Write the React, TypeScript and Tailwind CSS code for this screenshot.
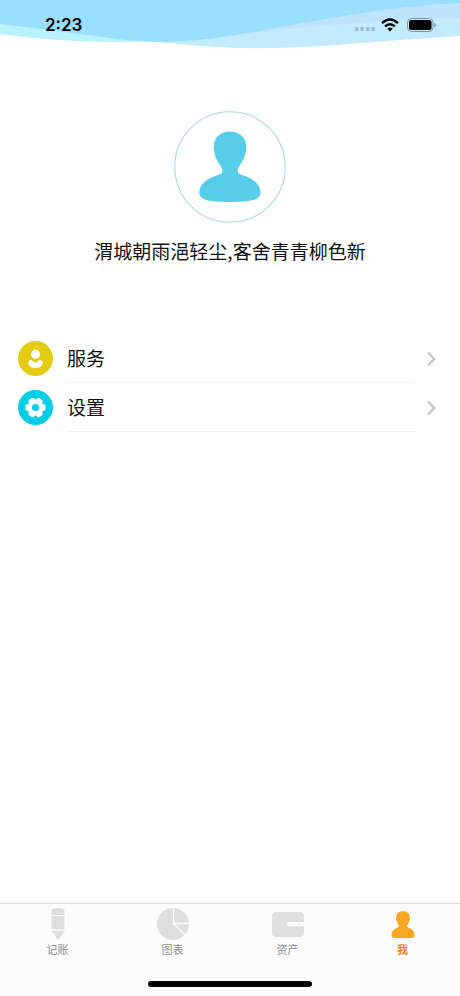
import type { ReactNode } from "react";

function Waves() {
  return (
    <svg
      className="absolute inset-x-0 top-0 h-[50px] w-full"
      viewBox="0 0 460 50"
      preserveAspectRatio="none"
      aria-hidden="true"
    >
      <path d="M0 20V34Q50 41 110 42Q150 42 190 40L190 20Z" fill="#b9f1ff" />
      <path d="M150 41Q190 46 236 48Q290 49 350 44Q410 39 460 36V0H150Z" fill="#c3ebff" />
      <path d="M150 41Q200 39 240 34Q320 25 345 24Q400 18 460 18V0H150Z" fill="#bde3ff" />
      <path d="M0 0V24Q60 31 110 38Q140 42 165 42Q200 41 236 35Q300 23 350 15Q410 5 460 3V0Z" fill="#99dfff" />
    </svg>
  );
}

function StatusBar() {
  return (
    <div className="relative flex h-[50px] items-center pr-6 pl-[45px] font-['Inter',sans-serif] text-black">
      <time className="flex-1 text-[17px] leading-[50px] font-semibold">2:23</time>
      <div className="flex items-center">
        <svg className="mt-2 mr-[6px] h-1 w-5" viewBox="0 0 20 4" fill="#9dbccd" aria-hidden="true">
          <rect width="3.6" height="4" rx="1.2" />
          <rect x="5.4" width="3.6" height="4" rx="1.2" />
          <rect x="10.9" width="3.6" height="4" rx="1.2" />
          <rect x="16.4" width="3.6" height="4" rx="1.2" />
        </svg>
        <svg className="mr-2 h-[14px] w-[18px]" viewBox="0 0 18 14" fill="none" stroke="#000" strokeWidth="2.4" aria-hidden="true">
          <path d="M1 5.1Q9 -2 17 5.1" />
          <path d="M4 8.4Q9 4 14 8.4" />
          <path d="M9 13.4L6.2 10.6Q9 8.4 11.8 10.6Z" fill="#000" stroke="none" />
        </svg>
        <svg className="h-[14px] w-[29px]" viewBox="0 0 29 14" aria-hidden="true">
          <rect x=".5" y=".5" width="25.5" height="13" rx="4" fill="none" stroke="#7d949f" />
          <rect x="2" y="2" width="22.5" height="10" rx="2.5" fill="#000" />
          <path d="M27.3 4.8Q29 5.6 29 7T27.3 9.2Z" fill="#7d949f" />
        </svg>
      </div>
    </div>
  );
}

function ServiceIcon() {
  return (
    <svg className="size-[35px]" viewBox="0 0 36 36" aria-hidden="true">
      <circle cx="18" cy="18" r="18" fill="#e6cb14" />
      <circle cx="18" cy="13.6" r="4.6" fill="#fff" />
      <path d="M13 19.2Q14.500 19.200 18 23Q21.500 19.200 23 19.200Q25.600 20 25.600 22.300Q24.700 27.800 18 27.800T10.400 22.300Q10.400 20 13 19.200Z" fill="#fff" />
    </svg>
  );
}

function SettingsIcon() {
  return (
    <svg className="size-[35px]" viewBox="0 0 36 36" aria-hidden="true">
      <circle cx="18" cy="18" r="18" fill="#05cde6" />
      <g fill="#fff">
        <circle cx="18" cy="18" r="8.4" />
        {[0, 60, 120].map((angle) => (
          <rect key={angle} x="7.6" y="14.6" width="20.8" height="6.8" rx="2" transform={`rotate(${angle} 18 18)`} />
        ))}
      </g>
      <circle cx="18" cy="18" r="3.7" fill="#05cde6" />
    </svg>
  );
}

function MenuRow({ icon, label }: { icon: ReactNode; label: string }) {
  return (
    <li>
      <button type="button" className="flex h-[49px] w-full items-center pr-6 text-left">
        <span className="w-[67px] shrink-0 pl-[18px]">{icon}</span>
        <span className="flex h-full flex-1 items-center border-b border-[#f1f1f1] text-[19px] leading-6">{label}</span>
        <svg className="ml-3 h-4 w-[9px]" viewBox="0 0 9 16" fill="none" stroke="#c4c4c4" strokeWidth="2.2" aria-hidden="true">
          <path d="M1 1.5L7.2 8L1 14.5" />
        </svg>
      </button>
    </li>
  );
}

function PencilIcon() {
  return (
    <svg className="size-8" viewBox="0 0 32 32" fill="#dedede" aria-hidden="true">
      <path d="M9.5 7V3Q9.5 0 16 0T22.5 3V7Z" />
      <path d="M9.5 8.2H22.5V21.4H9.5Z" />
      <path d="M9.5 23H22.5L16 32Z" />
    </svg>
  );
}

function PieIcon() {
  return (
    <svg className="size-8" viewBox="0 0 32 32" aria-hidden="true">
      <circle cx="16" cy="16" r="16" fill="#dedede" />
      <path d="M16.5 0V15.5H32M16.5 15.5L28 27" fill="none" stroke="#fff" strokeWidth="1.4" />
    </svg>
  );
}

function WalletIcon() {
  return (
    <svg className="size-8" viewBox="0 0 32 32" aria-hidden="true">
      <path d="M4 4H28Q32 4 32 8V14H17.5Q15 14 15 16.2T17.5 18.5H32V25Q32 29 28 29H4Q0 29 0 25V8Q0 4 4 4Z" fill="#dedede" />
      <circle cx="27" cy="16.3" r="0.8" fill="#dedede" />
    </svg>
  );
}

function PersonIcon() {
  return (
    <svg className="size-8" viewBox="0 0 32 32" fill="#f7a721" aria-hidden="true">
      <path d="M16 3C20.5 3 23 6 22.7 10C23.6 10.3 22.8 13.4 22 13.8C21.5 15.8 20.5 16.5 20 18C20.3 20.5 27 20 27.4 26V28.5Q26.5 30 22 30H10Q5.5 30 4.6 28.5V26C5 20 11.7 20.5 12 18C11.5 16.5 10.5 15.8 10 13.8C9.2 13.4 8.4 10.3 9.3 10C9 6 11.5 3 16 3Z" />
    </svg>
  );
}

const tabs = [
  { label: "记账", icon: <PencilIcon />, active: false },
  { label: "图表", icon: <PieIcon />, active: false },
  { label: "资产", icon: <WalletIcon />, active: false },
  { label: "我", icon: <PersonIcon />, active: true },
];

export default function App() {
  return (
    <div className="flex min-h-screen flex-col bg-white font-['Noto_Sans_CJK_SC',sans-serif] text-[#111]">
      <header className="relative">
        <Waves />
        <StatusBar />
      </header>

      <main className="flex-1">
        <section className="flex flex-col items-center pt-[61px]">
          <svg className="size-[112px]" viewBox="0 0 112 112" role="img" aria-label="头像">
            <circle cx="56" cy="56" r="55.2" fill="#fff" stroke="#a9d8d6" strokeWidth="1.1" />
            <path
              d="M56 20.5C66 20.5 72.3 27 72.3 36C72.3 46 67.5 51.5 64.5 56.5C62.5 61 64 62.5 68 64C80 67.5 86.5 74 86.5 81.5C86.5 88 80 91 56 91S25.3 88 25.3 81.5C25.3 74 32 67.5 44 64C48 62.5 49.5 61 47.5 56.5C44.5 51.5 39.7 46 39.7 36C39.7 27 46 20.5 56 20.5Z"
              fill="#56cee9"
            />
          </svg>
          <h1 className="mt-4 text-[19px] leading-6 font-normal">渭城朝雨浥轻尘,客舍青青柳色新</h1>
        </section>
        <ul className="mt-[71px]">
          <MenuRow icon={<ServiceIcon />} label="服务" />
          <MenuRow icon={<SettingsIcon />} label="设置" />
        </ul>
      </main>

      <footer className="border-t border-[#dfdfdf] bg-[#fcfcfc]">
        <nav className="grid grid-cols-4">
          {tabs.map((tab) => (
            <button
              key={tab.label}
              type="button"
              aria-current={tab.active ? "page" : undefined}
              className={`flex flex-col items-center pt-1 text-[11px] leading-4 ${tab.active ? "font-bold text-[#f77f1e]" : "text-[#8f8f8f]"}`}
            >
              {tab.icon}
              <span className="mt-px">{tab.label}</span>
            </button>
          ))}
        </nav>
        <div className="mx-auto mt-6 mb-[9px] h-[6px] w-[164px] rounded-full bg-black" />
      </footer>
    </div>
  );
}
